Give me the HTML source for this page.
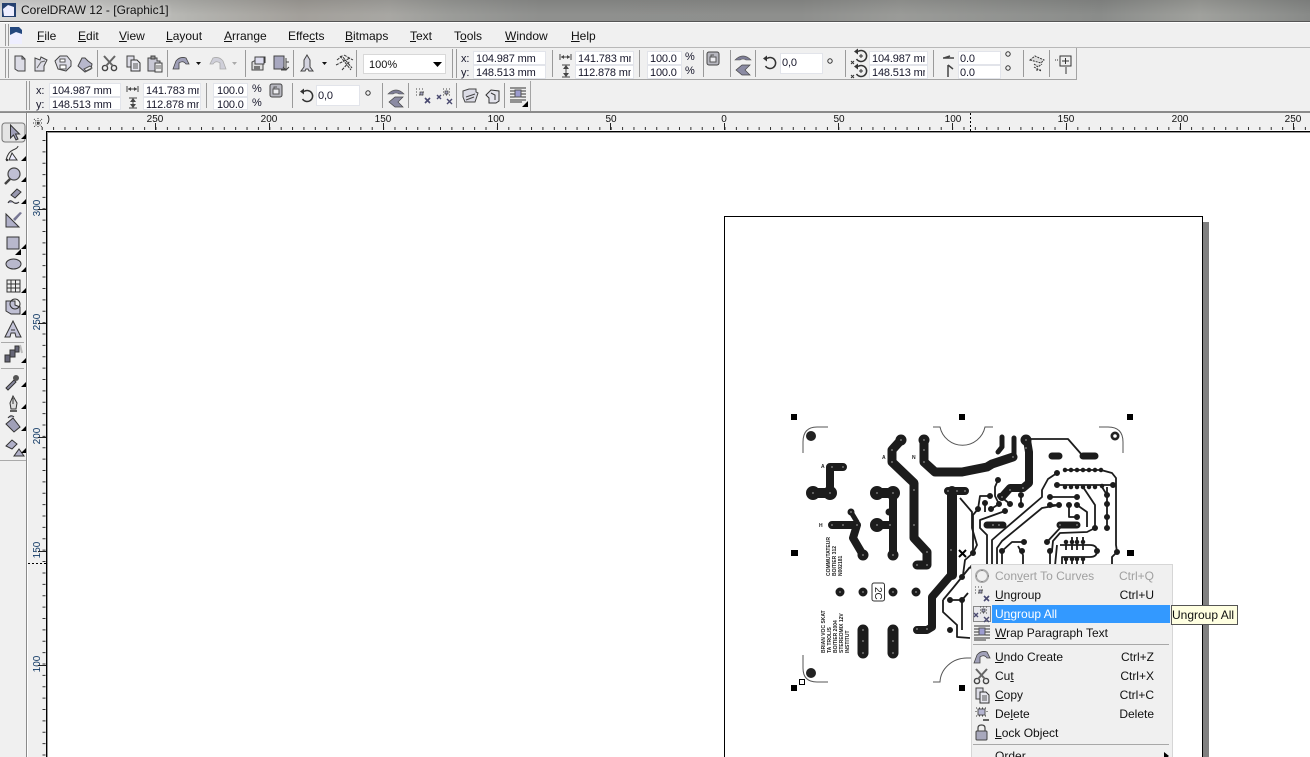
<!DOCTYPE html>
<html><head><meta charset="utf-8"><title>CorelDRAW 12</title>
<style>
html,body{margin:0;padding:0;width:1310px;height:757px;overflow:hidden;background:#f0f0f0}
body{position:relative;font-family:"Liberation Sans",sans-serif;font-size:12px;color:#111}
.a{position:absolute}
.t{position:absolute;white-space:nowrap;line-height:14px;height:14px}
.i{position:absolute;background:#fff;border:1px solid #e2e4ea;box-sizing:border-box}
.v{font-size:11px;letter-spacing:-.15px;line-height:13px;height:13px;color:#16162a}
.r{font-size:10px;line-height:10px;height:10px;color:#111;width:30px;text-align:center}
.rv{font-size:10px;line-height:10px;height:10px;color:#123a66;width:30px;text-align:center;transform:rotate(-90deg)}
.m{left:995px;color:#111}
.s{color:#111;text-align:right;width:60px;left:1094px}
svg{position:absolute;left:0;top:0}
</style></head><body>
<div class="a" style="left:0;top:0;width:1310px;height:21px;background:linear-gradient(180deg,rgba(0,0,0,.1),rgba(0,0,0,0) 70%),linear-gradient(90deg,#d8d8d8 0,#cbcbc9 100px,#b4b4b0 190px,#a3a09b 300px,#a8a7a3 390px,#9b9c99 450px,#8f908e 540px,#8e8f8d 800px,#9a9b98 900px,#8a8c8a 1100px,#a0a19d 1200px,#888a88 1310px)"></div>
<div class="a" style="left:0;top:21px;width:1310px;height:1px;background:#555"></div>
<div class="a" style="left:0;top:22px;width:1310px;height:1px;background:#fff"></div>
<div class="a" style="left:0;top:47px;width:1310px;height:1px;background:#b8b8b8"></div>
<div class="a" style="left:0;top:79px;width:1077px;height:1px;background:#a4a4a4"></div>
<div class="a" style="left:1076px;top:48px;width:1px;height:32px;background:#a4a4a4"></div>
<div class="a" style="left:0;top:111px;width:1310px;height:2px;background:#8a8a8a"></div>
<div class="a" style="left:530px;top:81px;width:1px;height:30px;background:#a4a4a4"></div>
<div class="a" style="left:46px;top:130px;width:1264px;height:627px;background:#fff"></div>
<div class="a" style="left:46px;top:131px;width:1264px;height:1px;background:#000"></div>
<div class="a" style="left:46px;top:132px;width:1264px;height:1px;background:#999"></div>
<div class="a" style="left:46px;top:131px;width:1px;height:626px;background:#000"></div>
<div class="a" style="left:47px;top:132px;width:1px;height:625px;background:#999"></div>
<div class="a" style="left:724px;top:216px;width:479px;height:541px;border:1px solid #000;border-bottom:0;box-sizing:border-box;background:#fff"></div>
<div class="a" style="left:1203px;top:222px;width:6px;height:535px;background:#808080"></div>

<div class="t" style="left:21px;top:3px;color:#111;text-shadow:0 0 4px #ddd">CorelDRAW 12 - [Graphic1]</div>
<div class="t" style="left:37px;top:29px"><u>F</u>ile</div>
<div class="t" style="left:78px;top:29px"><u>E</u>dit</div>
<div class="t" style="left:119px;top:29px"><u>V</u>iew</div>
<div class="t" style="left:166px;top:29px"><u>L</u>ayout</div>
<div class="t" style="left:224px;top:29px"><u>A</u>rrange</div>
<div class="t" style="left:288px;top:29px">Effe<u>c</u>ts</div>
<div class="t" style="left:345px;top:29px"><u>B</u>itmaps</div>
<div class="t" style="left:410px;top:29px"><u>T</u>ext</div>
<div class="t" style="left:454px;top:29px">T<u>o</u>ols</div>
<div class="t" style="left:505px;top:29px"><u>W</u>indow</div>
<div class="t" style="left:571px;top:29px"><u>H</u>elp</div>

<!-- inputs toolbar 1 -->
<div class="a" style="left:363px;top:54px;width:83px;height:20px;background:#fff;border:1px solid #d8d8d8;box-sizing:border-box"></div>
<div class="t" style="left:369px;top:58px;font-size:11px">100%</div>
<div class="i" style="left:473px;top:51px;width:73px;height:14px"></div>
<div class="i" style="left:473px;top:65px;width:73px;height:14px"></div>
<div class="i" style="left:575px;top:51px;width:59px;height:14px"></div>
<div class="i" style="left:575px;top:65px;width:59px;height:14px"></div>
<div class="i" style="left:647px;top:51px;width:35px;height:14px"></div>
<div class="i" style="left:647px;top:65px;width:35px;height:14px"></div>
<div class="i" style="left:780px;top:53px;width:43px;height:21px"></div>
<div class="i" style="left:869px;top:51px;width:59px;height:14px"></div>
<div class="i" style="left:869px;top:65px;width:59px;height:14px"></div>
<div class="i" style="left:958px;top:51px;width:43px;height:14px"></div>
<div class="i" style="left:958px;top:65px;width:43px;height:14px"></div>
<div class="t v" style="left:461px;top:53px">x:</div><div class="t v" style="left:461px;top:67px">y:</div>
<div class="t v" style="left:476px;top:53px">104.987 mm</div><div class="t v" style="left:476px;top:67px">148.513 mm</div>
<div class="t v" style="left:578px;top:53px;width:53px;overflow:hidden">141.783 mm</div><div class="t v" style="left:578px;top:67px;width:53px;overflow:hidden">112.878 mm</div>
<div class="t v" style="left:650px;top:53px">100.0</div><div class="t v" style="left:650px;top:67px">100.0</div>
<div class="t v" style="left:685px;top:51px">%</div><div class="t v" style="left:685px;top:65px">%</div>
<div class="t v" style="left:782px;top:57px">0,0</div>
<div class="t v" style="left:872px;top:53px;width:53px;overflow:hidden">104.987 mm</div><div class="t v" style="left:872px;top:67px;width:53px;overflow:hidden">148.513 mm</div>
<div class="t v" style="left:960px;top:53px">0.0</div><div class="t v" style="left:960px;top:67px">0.0</div>

<!-- inputs toolbar 2 -->
<div class="i" style="left:49px;top:83px;width:72px;height:14px"></div>
<div class="i" style="left:49px;top:97px;width:72px;height:13px"></div>
<div class="i" style="left:143px;top:83px;width:58px;height:14px"></div>
<div class="i" style="left:143px;top:97px;width:58px;height:13px"></div>
<div class="i" style="left:213px;top:83px;width:35px;height:14px"></div>
<div class="i" style="left:213px;top:97px;width:35px;height:13px"></div>
<div class="i" style="left:316px;top:85px;width:44px;height:21px"></div>
<div class="t v" style="left:36px;top:85px">x:</div><div class="t v" style="left:36px;top:99px">y:</div>
<div class="t v" style="left:52px;top:85px">104.987 mm</div><div class="t v" style="left:52px;top:99px">148.513 mm</div>
<div class="t v" style="left:146px;top:85px;width:53px;overflow:hidden">141.783 mm</div><div class="t v" style="left:146px;top:99px;width:53px;overflow:hidden">112.878 mm</div>
<div class="t v" style="left:217px;top:85px">100.0</div><div class="t v" style="left:217px;top:99px">100.0</div>
<div class="t v" style="left:252px;top:83px">%</div><div class="t v" style="left:252px;top:97px">%</div>
<div class="t v" style="left:318px;top:90px">0,0</div>

<!-- horizontal ruler -->
<div class="t r" style="left:140px;top:115px">250</div>
<div class="t r" style="left:254px;top:115px">200</div>
<div class="t r" style="left:368px;top:115px">150</div>
<div class="t r" style="left:481px;top:115px">100</div>
<div class="t r" style="left:596px;top:115px">50</div>
<div class="t r" style="left:709px;top:115px">0</div>
<div class="t r" style="left:824px;top:115px">50</div>
<div class="t r" style="left:938px;top:115px">100</div>
<div class="t r" style="left:1051px;top:115px">150</div>
<div class="t r" style="left:1165px;top:115px">200</div>
<div class="t r" style="left:1278px;top:115px">250</div>
<div class="t r" style="left:32px;top:115px;width:18px;overflow:hidden;text-align:right">)</div>
<!-- vertical ruler -->
<div class="t rv" style="left:23px;top:203px">300</div>
<div class="t rv" style="left:23px;top:317px">250</div>
<div class="t rv" style="left:23px;top:431px">200</div>
<div class="t rv" style="left:23px;top:545px">150</div>
<div class="t rv" style="left:23px;top:659px">100</div>

<svg width="1310" height="757" viewBox="0 0 1310 757">
<defs>
<g id="lock"><rect x="-6" y="-7" width="12" height="13" rx="2" fill="#b8b8c0" stroke="#444"/><rect x="-3" y="-2" width="6" height="5" fill="#ececf0" stroke="#555"/><path d="M-2-2v-2h3" fill="none" stroke="#555"/></g>
<g id="rot"><path d="M-3-4.500A5.500 5.500 0 1 1-4.500 3" fill="none" stroke="#333" stroke-width="1.500"/><path d="M-7-4.500l4-3v6z" fill="#333"/></g>
<g id="mir"><path d="M-8 2Q0-6 8 2H3Q0 0-3 2Z" fill="#7d7d96" stroke="#555" stroke-width=".6"/></g>
<g id="mir2"><path d="M7-5H-1L-7 0l6 5h8L2 0Z" fill="#8b8ba3" stroke="#444" stroke-width=".7"/></g>
<g id="ug"><path d="M-7-7h1m2 0h1m2 0h1M-7-4h1m6 0h1M-7-1h1m2 0h1m2 0h1" stroke="#444" fill="none"/><rect x="-3" y="-4" width="3" height="3" fill="#a4a4c0" stroke="#333" stroke-width=".7"/><path d="M2 2l5 5m0-5l-5 5" stroke="#4a4a70" stroke-width="1.600"/></g>
<g id="uga"><path d="M-8-1l4 4m0-4l-4 4M2 3l5 5m0-5l-5 5" stroke="#4a4a70" stroke-width="1.400"/><path d="M-2-7h1m2 0h1m2 0h1M-2-4h1m5 0h1M-2-1h1m2 0h1m2 0h1" stroke="#444" fill="none"/><rect x="0" y="-5" width="3" height="3" fill="#a4a4c0" stroke="#333" stroke-width=".7"/></g>
<g id="cut"><circle cx="-5" cy="5" r="2.600" fill="none" stroke="#444" stroke-width="1.400"/><circle cx="4" cy="5" r="2.600" fill="none" stroke="#444" stroke-width="1.400"/><path d="M-4 3L5-7M3 3L-6-7" stroke="#666" stroke-width="2"/></g>
<g id="cop"><path d="M-6-7h7v11h-7z" fill="#dcdce6" stroke="#444"/><path d="M-2-3h6l3 3v8H-2z" fill="#e8e8f0" stroke="#333"/><path d="M0 1h5M0 3h5M0 5h5" stroke="#555"/></g>
<g id="und"><path d="M-8 6L-5-2Q-1-7 5-5L8 1 5 1Q2-3-2 0L-2 6Z" fill="#a0a0b8" stroke="#444" stroke-width=".8"/></g>
<g id="wrp"><path d="M-8-7H8M-8-4H-3M3-4H8M-8-1H-3M3-1H8M-8 2H-3M3 2H8M-8 5H8M-8 7H4" stroke="#333"/><rect x="-3" y="-5" width="6" height="7" fill="#9c9cd0" stroke="#555"/></g>
</defs>

<!-- grips -->
<g stroke="#9a9a9a" fill="none">
<path d="M5.500 24V46M8.500 24V46M5.500 49V78M8.500 49V78M26.500 81V110M29.500 81V110M452.500 49V78M456.500 49V78"/>
<path d="M97.500 50V77M167.500 50V77M245.500 50V77M293.500 50V77M356.500 50V77M552.500 50V77M639.500 50V77M703.500 50V77M730.500 50V77M755.500 50V77M845.500 50V77M933.500 50V77M1023.500 50V77M1049.500 50V77M206.500 83V108M292.500 83V108M382.500 83V108M408.500 83V108M456.500 83V108M504.500 83V108"/>
</g>

<!-- title icon & doc icon -->
<rect x="2" y="3" width="14" height="14" fill="#25406f"/><path d="M3 9l5-4 6 2v9H4z" fill="#eef"/>
<path d="M10 27h9l3 3v14H10z" fill="#24487e"/><path d="M10 35l6-3 6 2v10H10z" fill="#eef"/>

<!-- toolbar 1 icons -->
<path d="M15 56h7l3 3v12h-7l-3-2z" fill="#dcdce6" stroke="#444"/><path d="M22 56v3h3" fill="none" stroke="#444"/>
<path d="M35 71V58l5 2 1-3 6 3-3 6v5z" fill="#dcdce6" stroke="#444"/><path d="M37 68l4-6 4-1" stroke="#666" fill="none"/>
<path d="M55 61l5-5h7l4 5v5l-5 5-8-2z" fill="#dcdce6" stroke="#444" stroke-linejoin="round"/><path d="M60 59h5v3h-5zM60 65h6v4h-6z" fill="#fff" stroke="#555"/>
<path d="M78 66l4-8h3l3 3 4 3-1 5-6 3z" fill="#b8b8cc" stroke="#444"/><path d="M84 69l6-3 2 2-6 3z" fill="#eee" stroke="#555"/>
<use href="#cut" x="110" y="63"/><use href="#cop" x="133" y="63"/>
<path d="M149 58h8v3h3v2h-2v8h-10v-13z" fill="#c8c8d4" stroke="#444"/><rect x="151" y="56" width="4" height="3" fill="#999" stroke="#444"/><rect x="155" y="63" width="7" height="9" fill="#eee" stroke="#444"/><path d="M156 66h5M156 68h5" stroke="#666"/>
<use href="#und" x="181" y="63"/><path d="M196 62h5l-2.500 3z" fill="#111"/>
<g opacity=".4"><use href="#und" x="0" y="0" transform="translate(218 63) scale(-1 1)"/></g><path d="M232 62h5l-2.500 3z" fill="#aaa"/>
<path d="M256 60h7v10h-11v-8z" fill="#ddd" stroke="#444"/><path d="M255 57h9v7h-9z" fill="#dde" stroke="#444"/><path d="M254 66h6v4h-6z" fill="#777"/><path d="M260 57h5v6" stroke="#333" fill="none"/>
<rect x="274" y="56" width="10" height="13" fill="#a8a8c0" stroke="#444"/><path d="M286 58v12h-5M286 62h3M283 67l3 3 3-3" stroke="#444" fill="none"/>
<path d="M307 55l3 5v7l3 4h-4l-1-2h-2l-1 2h-4l3-4v-7z" fill="#d4d4e0" stroke="#444"/><path d="M322 62h5l-2.500 3z" fill="#111"/>
<path d="M337 60l5-4 10 12M340 56l11 14M336 65l14-7M342 70l8-9M344 55l9 5" stroke="#333" fill="none" stroke-dasharray="3 1"/>
<path d="M433 62h9l-4.500 5z" fill="#000"/>

<!-- toolbar 1 numeric icons -->
<path d="M560 54v6M571 54v6M561 57h9" stroke="#444" fill="none"/><path d="M561 57l3-2v4zM570 57l-3-2v4z" fill="#444"/>
<path d="M562 65h8M562 77h8M566 66v10" stroke="#444"/><path d="M566 65l-3 4h6zM566 77l-3-4h6z" fill="#444"/>
<use href="#lock" x="713" y="59"/>
<use href="#mir" x="743" y="58"/><use href="#mir2" x="743" y="70"/>
<use href="#rot" x="770" y="63"/><circle cx="830" cy="61" r="2.200" fill="none" stroke="#333"/>
<use href="#rot" x="861" y="56"/><use href="#rot" x="861" y="71"/><path d="M859 56h4M861 54v4M859 71h4M861 69v4" stroke="#333"/>
<path d="M851 61l3 3m0-3l-3 3M851 75l3 3m0-3l-3 3" stroke="#333"/>
<path d="M943 58h11M950 56l-6 2" stroke="#444" stroke-width="1.500" fill="none"/><path d="M948 65v12M948 65l5 4" stroke="#444" stroke-width="1.500" fill="none"/>
<circle cx="1008" cy="54" r="2.200" fill="none" stroke="#333"/><circle cx="1008" cy="68" r="2.200" fill="none" stroke="#333"/>
<path d="M1030 60l5-4 9 4-3 3zM1034 64l4 3 4-3M1036 70h6M1034 67l7 4" stroke="#333" stroke-dasharray="2 1" fill="#ddd"/>
<path d="M1055 60h4" stroke="#333" stroke-dasharray="1 1"/><rect x="1060" y="56" width="11" height="10" fill="#eee" stroke="#333"/><path d="M1062 61h7M1065.500 58v6M1066 67v7" stroke="#333"/>

<!-- toolbar 2 numeric icons -->
<path d="M127 86v6M138 86v6M128 89h9" stroke="#444" fill="none"/><path d="M128 89l3-2v4zM137 89l-3-2v4z" fill="#444"/>
<path d="M129 98h8M129 108h8M133 99v8" stroke="#444"/><path d="M133 98l-3 4h6zM133 108l-3-4h6z" fill="#444"/>
<use href="#lock" x="276" y="91"/>
<use href="#rot" x="307" y="96"/><circle cx="368" cy="93" r="2.200" fill="none" stroke="#333"/>
<use href="#mir" x="396" y="92"/><use href="#mir2" x="396" y="102"/>
<use href="#ug" x="423" y="96"/><use href="#uga" x="445" y="96"/>
<path d="M463 91l6-2h7v3l2 1-3 9h-10l-2-5z" fill="#dcdce6" stroke="#444"/><path d="M466 97l9-3M466 100l8-3" stroke="#444"/>
<path d="M486 95l5-5 8 1v10l-3 2h-7v-5zM491 93l4 2v5" fill="#e4e4ec" stroke="#333"/>
<use href="#wrp" transform="translate(518 95)"/><path d="M528 101v6h-6z" fill="#000"/>

<!-- ruler ticks -->
<path d="M41.700 128.500H1310" stroke="#333" stroke-width="3" stroke-dasharray="1 10.380"/>
<path d="M155.500 123V130M269.500 123V130M383.500 123V130M497.500 123V130M610.500 123V130M724.500 123V130M838.500 123V130M952.500 123V130M1066.500 123V130M1180.500 123V130M1293.500 123V130" stroke="#222"/>
<path d="M970.500 113V131" stroke="#000" stroke-dasharray="2 2"/>
<path d="M44 140V757" stroke="#333" stroke-width="3" stroke-dasharray="1 10.380"/>
<path d="M38 209.500H46M38 323.500H46M38 437.500H46M38 551.500H46M38 665.500H46" stroke="#222"/>
<path d="M28 563.500H46" stroke="#000" stroke-dasharray="2 2"/>
<!-- ruler origin icon -->
<path d="M33 123h10M38 118v10M34 119l8 8M42 119l-8 8" stroke="#333" stroke-dasharray="1 1" fill="none"/>

<!-- toolbox -->
<path d="M26.500 113V757" stroke="#8a8a8a"/><path d="M27.500 113V757" stroke="#fff"/>
<path d="M0 460.500H26" stroke="#aaa"/><path d="M0 111.500H26" stroke="#999"/>
<rect x="2" y="123" width="23" height="19" rx="3" fill="#e4e4e4" stroke="#777"/>
<path d="M10.500 125v13l3-3 2.500 5 2-1-2.500-5h4z" fill="#a0a0b8" stroke="#333"/>
<path d="M6 160q2-8 7-10t5-4" fill="none" stroke="#333"/><path d="M9 160l3-7 5 7z" fill="#eef" stroke="#333"/><circle cx="7" cy="160" r="1.200" fill="#333"/>
<circle cx="14" cy="174" r="6" fill="#c0c0d4" stroke="#444" stroke-width="1.200"/><path d="M10 179l-5 5" stroke="#444" stroke-width="2.500"/>
<path d="M11 195l6-6 4 3-6 6zM8 203q2-4 5-1t6 0" fill="#9898b0" stroke="#333"/>
<path d="M6 227V214l13 13z" fill="#b0b0c8" stroke="#333"/><path d="M13 219l7-7 2 1-7 8z" fill="#777794"/>
<rect x="7" y="237" width="12" height="12" fill="#b8b8cc" stroke="#333"/><path d="M21 250v6h-6z" fill="#000" transform="translate(0 -1)"/>
<ellipse cx="13.500" cy="264" rx="7.500" ry="5" fill="#b8b8cc" stroke="#333"/>
<path d="M7 280h13v12H7zM7 284h13M7 288h13M11 280v12M15.500 280v12" fill="#eee" stroke="#333"/>
<path d="M6 301h9v4l5 2v7h-9l-5-3z" fill="#c0c0d4" stroke="#333"/><circle cx="15" cy="304" r="5" fill="none" stroke="#333"/>
<path d="M5 337l8-16 8 16h-5l-1-4h-4l-1 4z" fill="#c4c4d8" stroke="#333"/><path d="M11 330h4" stroke="#333"/>
<path d="M5 355h5v7H5zM10 350h5v7h-5zM15 346h4v6h-4z" fill="#667" stroke="#333"/><path d="M20 345l2 8" stroke="#bbb" stroke-width="2"/>
<path d="M1 342.500H24M1 368.500H24" stroke="#aaa"/>
<path d="M6 388l8-8 2 2-8 8z" fill="#8a8aa0" stroke="#333"/><circle cx="16" cy="378" r="3" fill="#555"/>
<path d="M13 396l4 7-1 6H11l-1-6zM13 398v6" fill="#ddd" stroke="#333"/><path d="M10 411h7" stroke="#333" stroke-width="1.500"/>
<path d="M6 424l7-6 7 9-6 5zM8 418q3-4 6-1" fill="#a0a0b8" stroke="#333"/>
<path d="M6 446l6-6 5 4-5 5zM14 456l5-7 5 7z" fill="#b0b0c8" stroke="#333"/>
<path fill="#000" d="M26 139v-5l-5 5zM26 161v-5l-5 5zM26 182v-5l-5 5zM26 204v-5l-5 5zM26 249v-5l-5 5zM26 272v-5l-5 5zM26 293v-5l-5 5zM26 315v-5l-5 5zM26 363v-5l-5 5zM26 387v-5l-5 5zM26 409v-5l-5 5zM26 431v-5l-5 5zM26 453v-5l-5 5z"/>

<!-- PCB outlines -->
<g fill="none" stroke="#555" stroke-width="1">
<path d="M803 453V442Q803 427 817 427H828"/>
<path d="M933 427H940A23 23 0 0 0 985 427H993"/>
<path d="M1099 427H1108Q1123 427 1123 442V453"/>
<path d="M803 655V668Q803 682 817 682H828"/>
<path d="M933 682H940A27 25 0 0 1 967 658H975"/>
</g>
<circle cx="811" cy="436" r="5" fill="#222"/><circle cx="811" cy="673" r="5" fill="#222"/>
<circle cx="1115" cy="436" r="4.500" fill="#222"/><circle cx="1115" cy="436" r="1.800" fill="#fff"/>
<!-- thick traces -->
<g fill="none" stroke="#1c1c1c" stroke-linecap="round" stroke-linejoin="round">
<path stroke-width="8" d="M830 493V467H843M832 525H857L853 538L863 555M893 493V555M877 525H890"/>
<path stroke-width="10" d="M813 493H830M877 493H893"/>
<path stroke-width="14" d="M813 493h0M830 493h0M877 493h0M893 493h0M877 525h0"/>
<path stroke-width="11" d="M863 555h0M893 555h0M901 440h0M924 440h0M1026 440h0"/>
<path stroke-width="9" d="M901 440L892 450V462L914 483V538L927 552V565H917"/>
<path stroke-width="9" d="M924 440V462L935 472H962L987 467L992 464L1013 457"/>
<path stroke-width="8" d="M948 491H965M951 575L932 597V627L927 630H917"/>
<path stroke-width="10" d="M952 491V575"/>
<path stroke-width="8" d="M1027 440L1029 452V483L1023 488H1010L1002 497"/>
<path stroke-width="11" d="M863 630V653M893 630V653"/>
<path stroke-width="7" d="M851 512h0M889 512h0M987 525H1003M1060 525H1077"/>
<path stroke-width="5" d="M1002 437V447L998 452M1014 438V457M851 512L857 522"/>
<path stroke-width="7" d="M1052 456h7M1083 456H1095"/>
</g>
<!-- thin traces -->
<g fill="none" stroke="#1c1c1c" stroke-width="1.800" stroke-linejoin="round">
<path d="M1026 439H1068L1082 455"/>
<path d="M1065 470H1101L1112 473L1116 478V545L1117 552L1112 557V566"/>
<path d="M1057 473L1048 479L1042 490V497L1000 533L992 540V566"/>
<path d="M1050 505H1059L1042 508L1002 541L997 548V566"/>
<path d="M1050 497H1077M1057 485H1113M1069 505V517H1077M1077 505L1087 512V527"/>
<path d="M1083 487L1095 505V528L1087 532L1060 533L1053 541L1052 551"/>
<path d="M1107 487V528M1102 487L1107 495"/>
<path d="M1060 528L1047 542M998 480L995 487V496L999 504M990 496H980L978 509L973 515V551"/>
<path d="M1005 511L980 520V528L987 535V566M985 503V512M991 509L999 504M1000 496L1010 504M1021 495V505"/>
<path d="M1024 542H1012L1002 551V566M1018 546L1023 555V566M1050 551V566"/>
<path d="M1060 545H1090Q1097 545 1097 551T1090 557H1062V566M1057 545L1055 566"/>
<path d="M1066 542V550M1072 537V550M1077 537V550M1083 537V550M1066 559V566M1072 559V566M1077 559V566M1083 559V566"/>
<path d="M960 498L972 512L972 528L977 545L973 553L965 560L963 575"/>
<path d="M943 600L953 588L970 567M943 600V612L957 625V637L970 638M950 600H962L968 593M962 600V630"/>
</g>
<g fill="none" stroke="#1c1c1c" stroke-linecap="round">
<path stroke-width="6" d="M1057 473h0M1057 485h0M1113 485h0M1050 497h0M1077 497h0M1050 505h0M1059 505h0M1069 505h0M1077 505h0M1077 517h0M1107 495h0M1107 504h0M1107 517h0M1107 528h0M1095 528h0M1047 542h0M998 480h0M990 496h0M1000 496h0M985 503h0M978 509h0M991 509h0M999 504h0M1005 511h0M1010 504h0M1021 505h0M1021 495h0M1024 542h0M1002 551h0M1022 551h0M1050 551h0M973 553h0M962 577h0M973 567h0M950 600h0M962 600h0M950 630h0M1117 552h0M1097 551h0"/>
<path stroke-width="4.500" d="M1065 470h0M1071 470h0M1077 470h0M1083 470h0M1089 470h0M1095 470h0M1101 470h0M1065 487h0M1071 487h0M1077 487h0M1083 487h0M1089 487h0M1095 487h0M1102 486h0M1066 542h0M1072 542h0M1077 542h0M1083 542h0M1066 559h0M1072 559h0M1077 559h0M1083 559h0"/>
<path stroke-width="9" d="M840 592h0M863 592h0M893 592h0M916 592h0"/>
</g>
<g fill="none" stroke="#fff" stroke-linecap="round" stroke-width="1.200">
<path d="M813 493h0M830 493h0M832 467h0M843 467h0M832 525h0M843 525h0M857 525h0M863 555h0M877 493h0M893 493h0M877 525h0M890 525h0M893 555h0M901 440h0M892 450h0M892 462h0M914 490h0M914 525h0M927 552h0M917 565h0M927 565h0M924 440h0M924 450h0M924 462h0M948 491h0M957 491h0M965 491h0M951 550h0M917 629h0M927 629h0M1026 440h0M1026 448h0M1013 457h0M1002 497h0M1010 490h0M1023 488h0M840 592h0M863 592h0M893 592h0M916 592h0M863 630h0M863 641h0M863 653h0M893 630h0M893 641h0M893 653h0M851 512h0M1060 525h0M1077 525h0M993 525h0M999 525h0"/>
</g>
<!-- 2C part -->
<rect x="872" y="583" width="12.500" height="18" rx="2" fill="#fff" stroke="#333"/>
<text transform="translate(874 587) rotate(90)" font-family="Liberation Sans" font-size="10" fill="#222" y="-1">2C</text>
<g font-family="Liberation Sans" font-size="5" font-weight="bold" fill="#222">
<text x="821" y="468">A</text><text x="819" y="527">H</text><text x="882" y="459">A</text><text x="912" y="459">N</text>
</g>
<g font-family="Liberation Sans" font-size="5" font-weight="bold" fill="#222">
<text transform="translate(842 576) rotate(-90)">N002181</text>
<text transform="translate(836 576) rotate(-90)">BOITIER 312</text>
<text transform="translate(830 576) rotate(-90)">COMMUTATEUR</text>
<text transform="translate(849 653) rotate(-90)">INSTITUT</text>
<text transform="translate(843 653) rotate(-90)">STEREOMIX 12V</text>
<text transform="translate(837 653) rotate(-90)">BOITIER 2004</text>
<text transform="translate(831 653) rotate(-90)">TA TROLIS</text>
<text transform="translate(825 653) rotate(-90)">BRIAN VOC SKAT</text>
</g>
<!-- handles -->
<path fill="#000" d="M791 414h6v6h-6zM959 414h6v6h-6zM1127 414h6v6h-6zM791 550h7v6h-7zM1127 550h7v6h-7zM791 685h6v6h-6zM959 685h6v6h-6z"/>
<path d="M959 550l7 7m0-7l-7 7" stroke="#000" stroke-width="2"/>
<rect x="799.500" y="679.500" width="5" height="5" fill="#fff" stroke="#000"/>
</svg>

<!-- context menu -->
<div class="a" style="left:971px;top:564px;width:202px;height:193px;background:#f0f0f0;border:1px solid #d6d6d6;border-bottom:0;box-sizing:border-box"></div>
<div class="a" style="left:992px;top:605px;width:178px;height:18px;background:#3399ff"></div>
<div class="a" style="left:973px;top:606px;width:18px;height:16px;background:#e8e8ec;border:1px solid #888;box-sizing:border-box"></div>
<div class="a" style="left:973px;top:644px;width:196px;height:1px;background:#a8a8a8"></div>
<div class="a" style="left:973px;top:744px;width:196px;height:1px;background:#a8a8a8"></div>
<div class="t m" style="top:569px;color:#a0a0a0">Con<u>v</u>ert To Curves</div><div class="t s" style="top:569px;color:#a0a0a0">Ctrl+Q</div>
<div class="t m" style="top:588px"><u>U</u>ngroup</div><div class="t s" style="top:588px">Ctrl+U</div>
<div class="t m" style="top:607px;color:#fff">U<u>n</u>group All</div>
<div class="t m" style="top:626px"><u>W</u>rap Paragraph Text</div>
<div class="t m" style="top:650px"><u>U</u>ndo Create</div><div class="t s" style="top:650px">Ctrl+Z</div>
<div class="t m" style="top:669px">Cu<u>t</u></div><div class="t s" style="top:669px">Ctrl+X</div>
<div class="t m" style="top:688px"><u>C</u>opy</div><div class="t s" style="top:688px">Ctrl+C</div>
<div class="t m" style="top:707px">De<u>l</u>ete</div><div class="t s" style="top:707px">Delete</div>
<div class="t m" style="top:726px"><u>L</u>ock Object</div>
<div class="t m" style="top:749px"><u>O</u>rder</div>
<div class="a" style="left:1171px;top:605px;width:67px;height:20px;background:#ffffe1;border:1px solid #555;box-sizing:border-box"></div>
<div class="t" style="left:1172px;top:608px">Ungroup All</div>
<svg width="1310" height="757" viewBox="0 0 1310 757">
<circle cx="982" cy="576" r="6" fill="none" stroke="#aaa" stroke-width="2"/><path d="M976 576h1M988 576h1M982 570v1M982 581v1" stroke="#888" stroke-width="2"/>
<use href="#ug" x="982" y="594"/><use href="#uga" x="982" y="614"/>
<use href="#wrp" x="982" y="633"/>
<use href="#und" x="982" y="657"/>
<use href="#cut" x="982" y="676"/>
<use href="#cop" x="982" y="695"/>
<path d="M976 708h1m2 0h1m2 0h1m2 0h1M976 716h1m2 0h1m2 0h1m2 0h1M976 711v1M987 711v1" stroke="#333"/><rect x="978" y="709" width="7" height="6" fill="#b4b4d0" stroke="#555"/><path d="M983 720h6" stroke="#333" stroke-width="1.500"/>
<rect x="976" y="731" width="11" height="9" rx="1" fill="#a8a8bc" stroke="#444"/><path d="M978 731v-3q0-3 3.500-3t3.500 3v3" fill="none" stroke="#444" stroke-width="1.200"/>
<path d="M1164 752l5 4-5 4z" fill="#000"/>
</svg>
</body></html>
